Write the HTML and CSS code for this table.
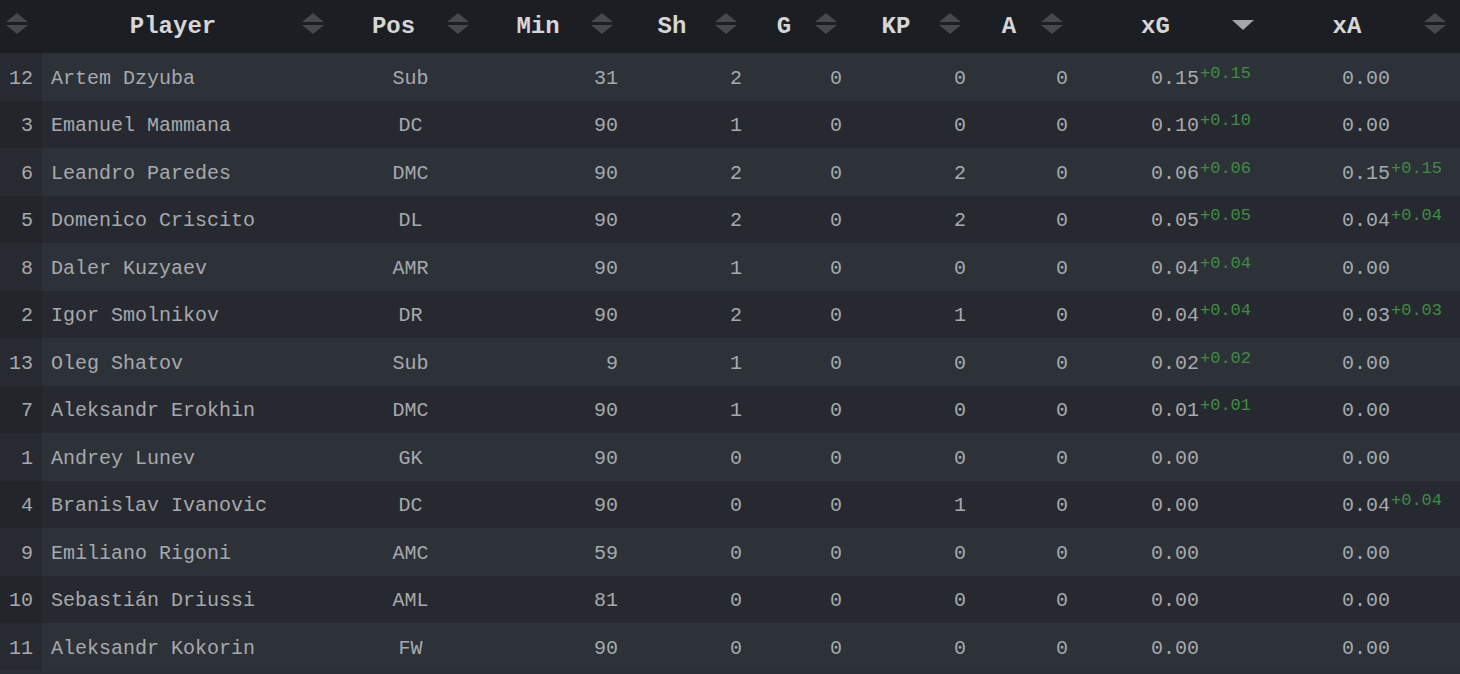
FILE: index.html
```html
<!DOCTYPE html>
<html>
<head>
<meta charset="utf-8">
<link rel="stylesheet" href="styles.css">
</head>
<body>
<table class="stats">
  <colgroup>
    <col class="c-num"><col class="c-player"><col class="c-pos"><col class="c-min"><col class="c-sh"><col class="c-g"><col class="c-kp"><col class="c-a"><col class="c-xg"><col class="c-xa">
  </colgroup>
  <thead>
    <tr>
      <th class="sortable"></th>
      <th class="sortable">Player</th>
      <th class="sortable">Pos</th>
      <th class="sortable">Min</th>
      <th class="sortable">Sh</th>
      <th class="sortable">G</th>
      <th class="sortable">KP</th>
      <th class="sortable">A</th>
      <th class="sorted-desc">xG</th>
      <th class="sortable">xA</th>
    </tr>
  </thead>
  <tbody>
    <tr><td class="num">12</td><td class="name">Artem Dzyuba</td><td class="pos">Sub</td><td class="n">31</td><td class="n">2</td><td class="n">0</td><td class="n">0</td><td class="n">0</td><td class="x">0.15<sup>+0.15</sup></td><td class="x">0.00</td></tr>
    <tr><td class="num">3</td><td class="name">Emanuel Mammana</td><td class="pos">DC</td><td class="n">90</td><td class="n">1</td><td class="n">0</td><td class="n">0</td><td class="n">0</td><td class="x">0.10<sup>+0.10</sup></td><td class="x">0.00</td></tr>
    <tr><td class="num">6</td><td class="name">Leandro Paredes</td><td class="pos">DMC</td><td class="n">90</td><td class="n">2</td><td class="n">0</td><td class="n">2</td><td class="n">0</td><td class="x">0.06<sup>+0.06</sup></td><td class="x">0.15<sup>+0.15</sup></td></tr>
    <tr><td class="num">5</td><td class="name">Domenico Criscito</td><td class="pos">DL</td><td class="n">90</td><td class="n">2</td><td class="n">0</td><td class="n">2</td><td class="n">0</td><td class="x">0.05<sup>+0.05</sup></td><td class="x">0.04<sup>+0.04</sup></td></tr>
    <tr><td class="num">8</td><td class="name">Daler Kuzyaev</td><td class="pos">AMR</td><td class="n">90</td><td class="n">1</td><td class="n">0</td><td class="n">0</td><td class="n">0</td><td class="x">0.04<sup>+0.04</sup></td><td class="x">0.00</td></tr>
    <tr><td class="num">2</td><td class="name">Igor Smolnikov</td><td class="pos">DR</td><td class="n">90</td><td class="n">2</td><td class="n">0</td><td class="n">1</td><td class="n">0</td><td class="x">0.04<sup>+0.04</sup></td><td class="x">0.03<sup>+0.03</sup></td></tr>
    <tr><td class="num">13</td><td class="name">Oleg Shatov</td><td class="pos">Sub</td><td class="n">9</td><td class="n">1</td><td class="n">0</td><td class="n">0</td><td class="n">0</td><td class="x">0.02<sup>+0.02</sup></td><td class="x">0.00</td></tr>
    <tr><td class="num">7</td><td class="name">Aleksandr Erokhin</td><td class="pos">DMC</td><td class="n">90</td><td class="n">1</td><td class="n">0</td><td class="n">0</td><td class="n">0</td><td class="x">0.01<sup>+0.01</sup></td><td class="x">0.00</td></tr>
    <tr><td class="num">1</td><td class="name">Andrey Lunev</td><td class="pos">GK</td><td class="n">90</td><td class="n">0</td><td class="n">0</td><td class="n">0</td><td class="n">0</td><td class="x">0.00</td><td class="x">0.00</td></tr>
    <tr><td class="num">4</td><td class="name">Branislav Ivanovic</td><td class="pos">DC</td><td class="n">90</td><td class="n">0</td><td class="n">0</td><td class="n">1</td><td class="n">0</td><td class="x">0.00</td><td class="x">0.04<sup>+0.04</sup></td></tr>
    <tr><td class="num">9</td><td class="name">Emiliano Rigoni</td><td class="pos">AMC</td><td class="n">59</td><td class="n">0</td><td class="n">0</td><td class="n">0</td><td class="n">0</td><td class="x">0.00</td><td class="x">0.00</td></tr>
    <tr><td class="num">10</td><td class="name">Sebastián Driussi</td><td class="pos">AML</td><td class="n">81</td><td class="n">0</td><td class="n">0</td><td class="n">0</td><td class="n">0</td><td class="x">0.00</td><td class="x">0.00</td></tr>
    <tr><td class="num">11</td><td class="name">Aleksandr Kokorin</td><td class="pos">FW</td><td class="n">90</td><td class="n">0</td><td class="n">0</td><td class="n">0</td><td class="n">0</td><td class="x">0.00</td><td class="x">0.00</td></tr>
  </tbody>
</table>
</body>
</html>
```
FILE: styles.css
```css
html, body {
  margin: 0;
  padding: 0;
  background: #2a2f35;
  overflow: hidden;
}

.stats {
  width: 1460px;
  table-layout: fixed;
  border-collapse: collapse;
  border-spacing: 0;
  font-family: "Liberation Mono", "Courier New", monospace;
  color: #a7a9ac;
}

.c-num { width: 42px; }
.c-player { width: 296px; }
.c-pos { width: 145px; }
.c-min { width: 144px; }
.c-sh { width: 124px; }
.c-g { width: 100px; }
.c-kp { width: 124px; }
.c-a { width: 102px; }
.c-xg { width: 191px; }
.c-xa { width: 192px; }

.stats thead tr {
  height: 53px;
  background: #1b1e22;
}

.stats th {
  position: relative;
  padding: 0 44px 1px 10px;
  font-size: 24px;
  font-weight: bold;
  color: #d6d6d6;
  text-align: center;
  white-space: nowrap;
}

.stats th.sortable::before,
.stats th.sortable::after {
  content: "";
  position: absolute;
  right: 14px;
  width: 0;
  height: 0;
  border-left: 11px solid transparent;
  border-right: 11px solid transparent;
}

.stats th.sortable::before {
  top: 13px;
  border-bottom: 9px solid #45494e;
}

.stats th.sortable::after {
  top: 25px;
  border-top: 9px solid #45494e;
}

.stats th.sorted-desc::after {
  content: "";
  position: absolute;
  right: 14px;
  top: 20px;
  width: 0;
  height: 0;
  border-left: 11px solid transparent;
  border-right: 11px solid transparent;
  border-top: 10px solid #a3a6a9;
}

.stats tbody tr {
  height: 47.5px;
}

.stats tbody tr:nth-child(odd) {
  background: #2d3239;
}

.stats tbody tr:nth-child(even) {
  background: #262a30;
}

.stats tbody tr:nth-child(odd) td.num {
  background: #272b31;
}

.stats tbody tr:nth-child(even) td.num {
  background: #22262b;
}

.stats td {
  padding: 3px 10px 0;
  font-size: 20px;
  white-space: nowrap;
  vertical-align: middle;
}

.stats td.num {
  text-align: right;
  padding: 3px 9px 0 0;
}

.stats td.name {
  text-align: left;
  padding-left: 9px;
}

.stats td.pos {
  text-align: center;
  padding: 3px 0 0;
}

.stats td.n {
  text-align: right;
  padding-right: 9px;
}

.stats td.x {
  text-align: left;
  padding-left: 74px;
  padding-right: 0;
}

.stats td.x sup {
  font-size: 17px;
  color: #3f8c43;
  vertical-align: 6px;
  line-height: 0;
  margin-left: 1px;
}
```
